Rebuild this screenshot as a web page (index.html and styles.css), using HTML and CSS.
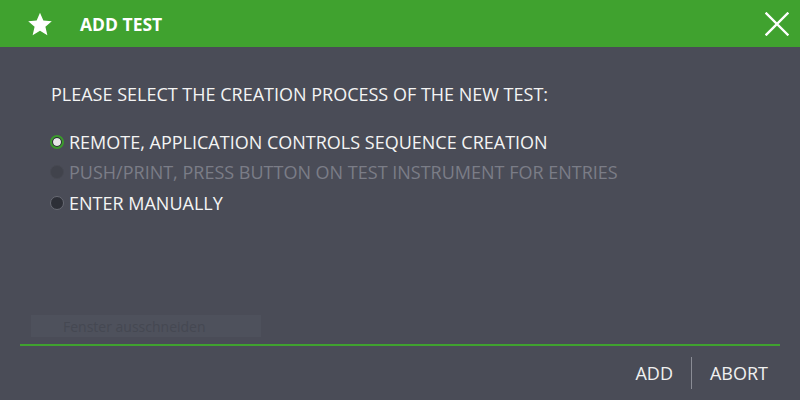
FILE: index.html
```html
<!DOCTYPE html>
<html lang="en">
<head>
  <meta charset="UTF-8" />
  <title>Add Test</title>
  <link rel="stylesheet" href="styles.css">
</head>
<body>
  <div class="dialog">
    <header class="titlebar">
      <svg class="star" width="26" height="26" viewBox="0 0 24 24">
        <path d="M12 1.5l3.1 7.2 7.8.7-5.9 5.2 1.8 7.7L12 18.2l-6.8 4.1 1.8-7.7-5.9-5.2 7.8-.7z" fill="#fff"/>
      </svg>
      <h1>ADD TEST</h1>
      <svg class="close" width="24" height="24" viewBox="0 0 24 24">
        <path d="M1.5 1.5l21 21M22.5 1.5l-21 21" stroke="#fff" stroke-width="2.4" stroke-linecap="square"/>
      </svg>
    </header>

    <main class="content">
      <p class="question">PLEASE SELECT THE CREATION PROCESS OF THE NEW TEST:</p>
      <div class="options">
        <label class="option checked"><span class="dot"></span>REMOTE, APPLICATION CONTROLS SEQUENCE CREATION</label>
        <label class="option disabled"><span class="dot"></span>PUSH/PRINT, PRESS BUTTON ON TEST INSTRUMENT FOR ENTRIES</label>
        <label class="option"><span class="dot"></span>ENTER MANUALLY</label>
      </div>
    </main>

    <div class="ghost"><span>Fenster ausschneiden</span></div>

    <footer class="actions">
      <button>ADD</button>
      <span class="sep"></span>
      <button>ABORT</button>
    </footer>
  </div>
</body>
</html>
```

FILE: styles.css
```css
html, body {
  margin: 0;
  height: 100%;
}
body {
  background-color: #4a4c57;
  font-family: "Open Sans", "Noto Sans", sans-serif;
  color: #f4f4f4;
}
.dialog {
  display: flex;
  flex-direction: column;
  height: 400px;
}
.titlebar {
  height: 47px;
  background-color: #40a22f;
  display: flex;
  align-items: center;
  padding: 0 11px 0 27px;
}
.titlebar h1 {
  margin: 0 0 0 27px;
  font-size: 17.5px;
  font-weight: 700;
  color: #fff;
  flex: 1;
}
.content {
  padding: 34px 0 0 50px;
}
.question {
  margin: 0 0 22px 1px;
  font-size: 18px;
  line-height: 26px;
}
.options {
  display: flex;
  flex-direction: column;
  gap: 5px;
}
.option {
  display: flex;
  align-items: center;
  font-size: 18px;
  height: 25.5px;
}
.dot {
  flex-shrink: 0;
  box-sizing: border-box;
  width: 14px;
  height: 14px;
  border-radius: 50%;
  background: #2d2f37;
  border: 1px solid #686a74;
  margin-right: 5px;
}
.option.checked .dot {
  border: 2px solid #3a9a2b;
  padding: 1px;
  background-color: #e6e6e6;
  background-clip: content-box;
  box-shadow: inset 0 0 0 1px #2d2f37;
}
.option.disabled {
  color: #7b7d87;
}
.option.disabled .dot {
  background: #41434c;
  border-color: #474952;
}
.ghost {
  margin: auto 0 0 31px;
  width: 230px;
  height: 22px;
  background: #4e515c;
  display: flex;
  align-items: center;
}
.ghost span {
  margin-left: 32px;
  font-size: 14px;
  color: #454852;
}
.actions {
  margin: 7px 20px 0;
  border-top: 2px solid #40a22f;
  height: 54px;
  display: flex;
  justify-content: flex-end;
  align-items: center;
  padding-right: 12px;
}
.actions button {
  background: none;
  border: none;
  color: #f0f0f0;
  font-family: inherit;
  font-size: 18px;
  padding: 0;
  cursor: pointer;
}
.sep {
  width: 1px;
  height: 32px;
  background: #8a8c95;
  margin: 0 18px;
}
```
